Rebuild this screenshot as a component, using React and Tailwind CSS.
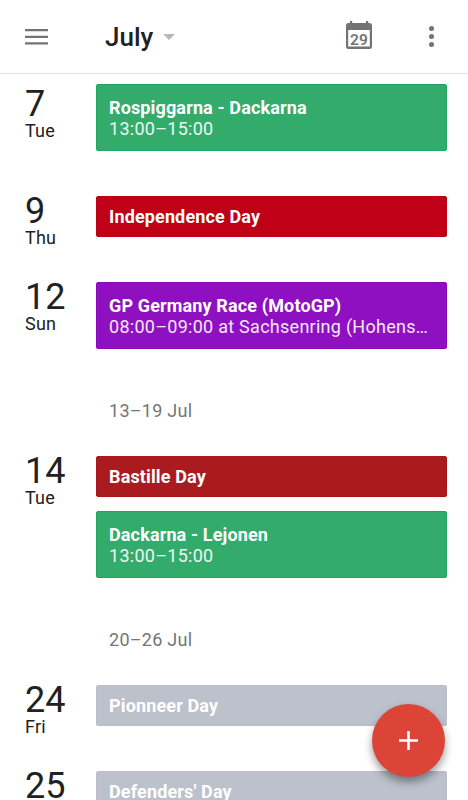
const days = [
  {
    date: "7",
    weekday: "Tue",
    className: "h-[112px]",
    dateClass: "pt-[5px]",
    events: [{ title: "Rospiggarna - Dackarna", time: "13:00–15:00", color: "bg-[#33ab6b] border-[#1ea660]" }],
  },
  {
    date: "9",
    weekday: "Thu",
    className: "h-[86px]",
    events: [{ title: "Independence Day", color: "bg-[#c00016] border-[#bc0014]" }],
  },
  {
    date: "12",
    weekday: "Sun",
    className: "h-[174px]",
    events: [
      {
        title: "GP Germany Race (MotoGP)",
        time: "08:00–09:00 at Sachsenring (Hohens…",
        color: "bg-[#8e10c0] border-[#8a08bc]",
      },
    ],
    nextWeek: "13–19 Jul",
  },
  {
    date: "14",
    weekday: "Tue",
    className: "h-[229px]",
    events: [
      { title: "Bastille Day", color: "bg-[#aa1b20] border-[#a7161b]" },
      { title: "Dackarna - Lejonen", time: "13:00–15:00", color: "bg-[#33ab6b] border-[#1ea660]" },
    ],
    nextWeek: "20–26 Jul",
  },
  {
    date: "24",
    weekday: "Fri",
    className: "h-[86px]",
    events: [{ title: "Pionneer Day", color: "bg-[#bcc1cb] border-[#babfc9]" }],
  },
  {
    date: "25",
    className: "h-[86px]",
    events: [{ title: "Defenders' Day", color: "bg-[#bcc1cb] border-[#babfc9]" }],
  },
];

function Header() {
  return (
    <header className="flex h-[74px] shrink-0 items-center border-b border-[#e2e2e2] pl-[25px] pr-[34px]">
      <button aria-label="Menu">
        <svg width="23" height="16" viewBox="0 0 23 16" fill="#737373">
          <path d="M0 0h23v2.200H0zM0 6.700h23v2.200H0zM0 13.300h23v2.200H0z" />
        </svg>
      </button>
      <button className="ml-[57px] flex items-center gap-[10px]">
        <span className="text-[26px] leading-[30px] font-medium text-[#212121]">July</span>
        <svg width="12" height="6" viewBox="0 0 12 6" fill="#b8b8b8">
          <path d="M0 0h12L6 6z" />
        </svg>
      </button>
      <button className="mb-[3px] ml-auto" aria-label="Today">
        <svg width="26" height="28" viewBox="0 0 26 28" fill="#737373">
          <path
            fillRule="evenodd"
            d="M4 0h2.200v2H20V0h2.200v2H23.500a2.500 2.500 0 0 1 2.500 2.500v21a2.500 2.500 0 0 1-2.500 2.500h-21A2.500 2.500 0 0 1 0 25.500v-21A2.500 2.500 0 0 1 2.500 2H4zM2.200 9v16.500h21.600V9z"
          />
          <text x="13.100" y="23.600" textAnchor="middle" fontSize="15.500" fontWeight="600" letterSpacing="0.300">
            29
          </text>
        </svg>
      </button>
      <button className="ml-[57px] flex flex-col gap-[3px]" aria-label="More">
        <span className="size-[5px] rounded-full bg-[#737373]" />
        <span className="size-[5px] rounded-full bg-[#737373]" />
        <span className="size-[5px] rounded-full bg-[#737373]" />
      </button>
    </header>
  );
}

function Event({ title, time, color }) {
  return (
    <div
      className={`rounded-[2px] border px-3 text-[18px] leading-[22px] text-white ${
        time ? "h-[67px] pt-[12px]" : "h-[41px] pt-[9px]"
      } ${color}`}
    >
      <p className="font-bold tracking-[0.14px] whitespace-nowrap">{title}</p>
      {time && <p className="-mt-px tracking-[0.27px] whitespace-nowrap text-white/90">{time}</p>}
    </div>
  );
}

function Day({ date, weekday, className, dateClass = "", events, nextWeek }) {
  return (
    <section className={`flex shrink-0 ${className}`}>
      <div className={`w-[96px] pl-[25px] text-[#212121] ${dateClass}`}>
        <p className="pt-px text-[36px] leading-[28px]">{date}</p>
        {weekday && <p className="mt-[2px] text-[18px] leading-[22px] tracking-[0.2px]">{weekday}</p>}
      </div>
      <div className="flex w-[351px] flex-col gap-[14px]">
        {events.map((event) => (
          <Event key={event.title} {...event} />
        ))}
        {nextWeek && (
          <p className="mt-[37px] pl-[13px] text-[18px] leading-[22px] tracking-[0.27px] text-[#757575]">{nextWeek}</p>
        )}
      </div>
    </section>
  );
}

export default function App() {
  return (
    <div className="relative flex h-[800px] w-[468px] flex-col overflow-hidden bg-white font-['Roboto',sans-serif]">
      <Header />
      <main className="flex min-h-0 flex-1 flex-col overflow-hidden pt-[10px]">
        {days.map((day) => (
          <Day key={day.date} {...day} />
        ))}
      </main>

      {/* Floating add button */}
      <button
        className="absolute right-[23px] bottom-[23px] flex size-[73px] items-center justify-center rounded-full bg-[#db4437] shadow-[0_5px_9px_rgba(0,0,0,0.4)]"
        aria-label="Add event"
      >
        <svg width="19" height="19" viewBox="0 0 19 19" fill="none" stroke="#fff" strokeWidth="2.600">
          <path d="M9.500 0v19M0 9.500h19" />
        </svg>
      </button>
    </div>
  );
}
